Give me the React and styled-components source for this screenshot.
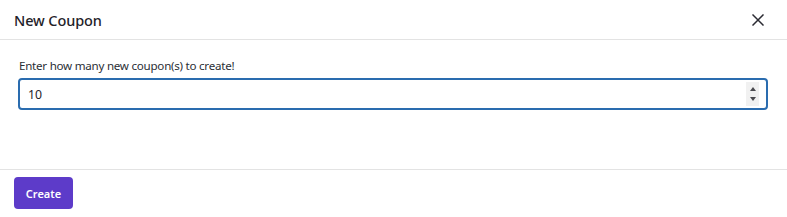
import React, { useState } from "react"
import styled, { createGlobalStyle } from "styled-components"

const GlobalStyle = createGlobalStyle`
  html, body {
    margin: 0;
    padding: 0;
    background: #ffffff;
    font-family: "Noto Sans", "Open Sans", Arial, sans-serif;
  }
`

const Modal = styled.div`
  width: 787px;
  height: 217px;
  display: flex;
  flex-direction: column;
  background: #fff;
  color: #212529;
  overflow: hidden;
`

const Header = styled.header`
  height: 39px;
  display: flex;
  align-items: center;
  justify-content: space-between;
  padding: 0 22px 0 14px;
  border-bottom: 1px solid #e3e3e3;
  flex-shrink: 0;
`

const Title = styled.h2`
  margin: 0;
  font-size: 14.5px;
  font-weight: 500;
  color: #1f2229;
  letter-spacing: -0.1px;
`

const CloseButton = styled.button`
  border: none;
  background: none;
  padding: 0;
  width: 14px;
  height: 14px;
  display: flex;
  align-items: center;
  justify-content: center;
  cursor: pointer;
`

const Body = styled.div`
  flex: 1;
  padding: 18px 19px 0 18px;
  border-bottom: 1px solid #e3e3e3;
`

const Label = styled.label`
  display: block;
  font-size: 11.6px;
  letter-spacing: -0.25px;
  color: #2b2f36;
  margin: 0 0 5px 1px;
`

const Field = styled.div`
  height: 28px;
  display: flex;
  align-items: center;
  border: 2px solid #2a6caf;
  border-radius: 4px;
  padding: 0 7px 0 8px;
`

const NumberInput = styled.input`
  flex: 1;
  border: none;
  outline: none;
  font-family: inherit;
  font-size: 12.3px;
  color: #1f2229;
  padding: 0;
  background: transparent;
  -moz-appearance: textfield;
  &::-webkit-inner-spin-button,
  &::-webkit-outer-spin-button {
    -webkit-appearance: none;
    margin: 0;
  }
`

const Spinner = styled.div`
  width: 13px;
  height: 24px;
  background: #f1f1f1;
  display: flex;
  flex-direction: column;
  align-items: center;
  justify-content: space-around;
  padding: 2px 0;
  box-sizing: border-box;
`

const Arrow = styled.span`
  width: 0;
  height: 0;
  border-left: 3.5px solid transparent;
  border-right: 3.5px solid transparent;
  ${p => p.$up
    ? "border-bottom: 4px solid #4a4a4f;"
    : "border-top: 4px solid #4a4a4f;"}
`

const Footer = styled.footer`
  height: 47px;
  padding: 7px 14px;
  box-sizing: border-box;
  flex-shrink: 0;
`

const CreateButton = styled.button`
  width: 59px;
  height: 32px;
  border: none;
  border-radius: 4px;
  background: #5d3bc9;
  color: #fff;
  font-family: inherit;
  font-size: 11px;
  font-weight: 600;
  cursor: pointer;
`

function App() {
  const [count, setCount] = useState("10")
  return (
    <>
      <GlobalStyle />
      <Modal>
        <Header>
          <Title>New Coupon</Title>
          <CloseButton aria-label="Close">
            <svg width="12" height="12" viewBox="0 0 12 12">
              <path d="M1 1L11 11M11 1L1 11" stroke="#2b2b33" strokeWidth="1.5" strokeLinecap="square" />
            </svg>
          </CloseButton>
        </Header>
        <Body>
          <Label htmlFor="count">Enter how many new coupon(s) to create!</Label>
          <Field>
            <NumberInput id="count" type="number" value={count} onChange={e => setCount(e.target.value)} />
            <Spinner>
              <Arrow $up />
              <Arrow />
            </Spinner>
          </Field>
        </Body>
        <Footer>
          <CreateButton>Create</CreateButton>
        </Footer>
      </Modal>
    </>
  )
}

export default App
